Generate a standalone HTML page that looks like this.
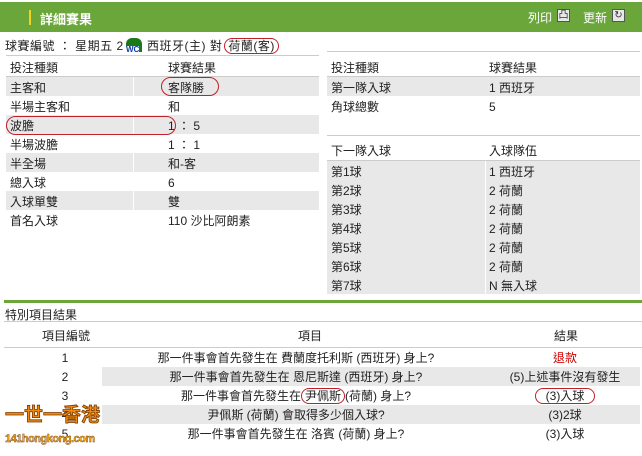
<!DOCTYPE html>
<html><head><meta charset="utf-8"><style>
*{margin:0;padding:0;box-sizing:border-box}
body{width:642px;height:456px;background:#fff;font-family:"Liberation Sans","Noto Sans CJK TC",sans-serif;font-size:12px;color:#222;position:relative;overflow:hidden}
.a{position:absolute;white-space:nowrap}
.g{background:#e8e8e8}
.oval{position:absolute;border:1.2px solid #c0202a;border-radius:10px}
.ov{border:1.2px solid #c0202a;border-radius:10px;padding:0 3px}
</style></head><body>
<div class="a" style="left:0;top:2px;width:642px;height:30px;background:#6aa63a"></div>
<div class="a" style="left:29px;top:10px;width:2px;height:15px;background:#f2d21c"></div>
<div class="a" style="left:40px;top:9px;color:#fff;font-weight:bold;font-size:13px">詳細賽果</div>
<div class="a" style="left:528px;top:9px;color:#fff;font-size:12px">列印</div>
<div class="a" style="left:557px;top:9px;width:13px;height:13px;background:#e8e8e8;border:1px solid #555;font-size:10px;line-height:11px;text-align:center;color:#333">凸</div>
<div class="a" style="left:583px;top:9px;color:#fff;font-size:12px">更新</div>
<div class="a" style="left:612px;top:9px;width:13px;height:13px;background:#e8e8e8;border:1px solid #555;font-size:10px;line-height:11px;text-align:center;color:#333">↻</div>

<div class="a" style="left:5px;top:37px;letter-spacing:0.5px">球賽編號 ： 星期五 2</div>
<div class="a" style="left:126px;top:38px;width:16px;height:14px;background:#1a7a1a;border-radius:6px 6px 0 0"></div>
<div class="a" style="left:126px;top:46px;font-size:8px;color:#1040a0;background:#fff;font-weight:bold;line-height:8px">WC</div>
<div class="a" style="left:147px;top:37px;letter-spacing:0.5px">西班牙(主) 對<span class="ov" style="margin-left:2px">荷蘭(客)</span></div>

<!-- left table -->
<div class="a" style="left:6px;top:55px;width:313px;height:1px;background:#ccc"></div>
<div class="a" style="left:6px;top:76px;width:313px;height:1px;background:#ccc"></div>
<div class="a g" style="left:6px;top:77px;width:313px;height:19px"></div>
<div class="a g" style="left:6px;top:115px;width:313px;height:19px"></div>
<div class="a g" style="left:6px;top:153px;width:313px;height:19px"></div>
<div class="a g" style="left:6px;top:191px;width:313px;height:19px"></div>
<div class="a" style="left:133px;top:77px;width:1px;height:152px;background:#fff"></div>
<div class="a" style="left:10px;top:59px">投注種類</div>
<div class="a" style="left:168px;top:59px">球賽結果</div>
<div class="a" style="left:10px;top:79px;line-height:19px">主客和<br>半場主客和<br>波膽<br>半場波膽<br>半全場<br>總入球<br>入球單雙<br>首名入球</div>
<div class="a" style="left:168px;top:79px;line-height:19px">客隊勝<br>和<br>1 ： 5<br>1 ： 1<br>和-客<br>6<br>雙<br>110 沙比阿朗素</div>
<div class="oval" style="left:161px;top:77px;width:58px;height:19px"></div>
<div class="oval" style="left:6px;top:116px;width:170px;height:19px"></div>

<!-- right table -->
<div class="a" style="left:327px;top:51px;width:313px;height:1px;background:#ccc"></div>
<div class="a" style="left:327px;top:76px;width:313px;height:1px;background:#ccc"></div>
<div class="a g" style="left:327px;top:77px;width:313px;height:19px"></div>
<div class="a" style="left:331px;top:59px">投注種類</div>
<div class="a" style="left:489px;top:59px">球賽結果</div>
<div class="a" style="left:331px;top:79px;line-height:19px">第一隊入球<br>角球總數</div>
<div class="a" style="left:489px;top:79px;line-height:19px">1 西班牙<br>5</div>
<div class="a" style="left:327px;top:135px;width:313px;height:1px;background:#ccc"></div>
<div class="a" style="left:327px;top:160px;width:313px;height:1px;background:#ccc"></div>
<div class="a g" style="left:327px;top:161px;width:313px;height:133px"></div>
<div class="a" style="left:485px;top:161px;width:1px;height:133px;background:#fff"></div>
<div class="a" style="left:331px;top:142px">下一隊入球</div>
<div class="a" style="left:489px;top:142px">入球隊伍</div>
<div class="a" style="left:331px;top:163px;line-height:19px">第1球<br>第2球<br>第3球<br>第4球<br>第5球<br>第6球<br>第7球</div>
<div class="a" style="left:489px;top:163px;line-height:19px">1 西班牙<br>2 荷蘭<br>2 荷蘭<br>2 荷蘭<br>2 荷蘭<br>2 荷蘭<br>N 無入球</div>

<!-- special -->
<div class="a" style="left:4px;top:300px;width:638px;height:3px;background:#6aa63a"></div>
<div class="a" style="left:5px;top:306px">特別項目結果</div>
<div class="a" style="left:4px;top:321px;width:638px;height:1px;background:#ccc"></div>
<div class="a" style="left:4px;top:347px;width:638px;height:1px;background:#ccc"></div>
<div class="a g" style="left:102px;top:367px;width:538px;height:19px"></div>
<div class="a g" style="left:102px;top:405px;width:538px;height:19px"></div>
<div class="a" style="left:42px;top:327px">項目編號</div>
<div class="a" style="left:298px;top:327px">項目</div>
<div class="a" style="left:554px;top:327px">結果</div>
<div class="a" style="left:0;top:349px;width:130px;text-align:center;line-height:19px">1<br>2<br>3<br>4<br>5</div>
<div class="a" style="left:102px;top:349px;width:388px;text-align:center;line-height:19px">那一件事會首先發生在 費蘭度托利斯 (西班牙) 身上?<br>那一件事會首先發生在 恩尼斯達 (西班牙) 身上?<br>那一件事會首先發生在<span class="ov">尹佩斯</span>(荷蘭) 身上?<br>尹佩斯 (荷蘭) 會取得多少個入球?<br>那一件事會首先發生在 洛賓 (荷蘭) 身上?</div>
<div class="a" style="left:490px;top:349px;width:150px;text-align:center;line-height:19px"><span style="color:#c00">退款</span><br>(5)上述事件沒有發生<br><span class="ov" style="padding:0 10px">(3)入球</span><br>(3)2球<br>(3)入球</div>
<div class="a" style="left:5px;top:404px;font-size:19px;font-weight:bold;color:#f08a10;-webkit-text-stroke:0.8px #7a3a00;line-height:24px">一世一香港</div>
<div class="a" style="left:5px;top:433px;font-size:11px;font-weight:bold;color:#f5b020;-webkit-text-stroke:0.4px #7a3a00;letter-spacing:-0.5px">141hongkong.com</div>
</body></html>
